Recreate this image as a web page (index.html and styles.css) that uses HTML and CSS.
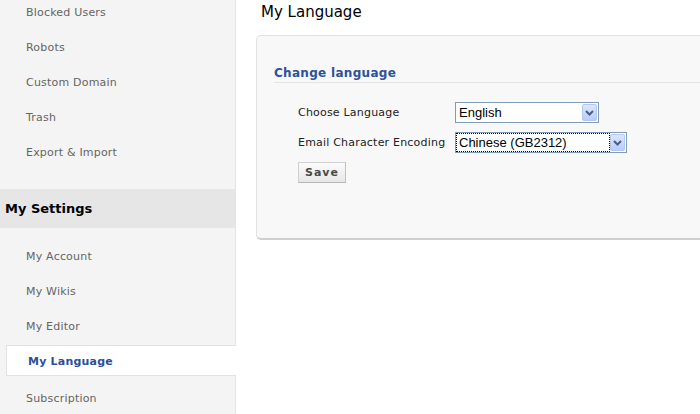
FILE: index.html
```html
<!DOCTYPE html>
<html lang="en">
<head>
    <meta charset="UTF-8">
    <title>My Language</title>
    <link rel="stylesheet" href="styles.css">
</head>
<body>
    <div class="sidebar">
        <ul class="nav first">
            <li>Blocked Users</li>
            <li>Robots</li>
            <li>Custom Domain</li>
            <li>Trash</li>
            <li>Export &amp; Import</li>
        </ul>
        <div class="nav-title">My Settings</div>
        <ul class="nav">
            <li>My Account</li>
            <li>My Wikis</li>
            <li>My Editor</li>
            <li class="active">My Language</li>
            <li>Subscription</li>
        </ul>
    </div>

    <div class="main">
        <h1>My Language</h1>
        <div class="panel">
            <h2>Change language</h2>

            <div class="row">
                <label for="language">Choose Language</label>
                <div class="select-box">
                    <select id="language">
                        <option>English</option>
                        <option>中文(简体)</option>
                        <option>中文(繁體)</option>
                    </select>
                    <span class="arrow"><svg width="9" height="6" viewBox="0 0 9 6"><polyline points="1,1 4.5,4.5 8,1" fill="none" stroke="#4a5d85" stroke-width="2"/></svg></span>
                </div>
            </div>

            <div class="row">
                <label for="encoding">Email Character Encoding</label>
                <div class="select-box wide">
                    <select id="encoding" class="focused">
                        <option>Chinese (GB2312)</option>
                        <option>Unicode (UTF-8)</option>
                    </select>
                    <span class="arrow"><svg width="9" height="6" viewBox="0 0 9 6"><polyline points="1,1 4.5,4.5 8,1" fill="none" stroke="#4a5d85" stroke-width="2"/></svg></span>
                </div>
            </div>

            <button>Save</button>
        </div>
    </div>
</body>
</html>
```

FILE: styles.css
```css
body {
    margin: 0;
    display: flex;
    overflow: hidden;
    height: 414px;
    font-family: "DejaVu Sans", Verdana, sans-serif;
    font-size: 11px;
    letter-spacing: 0.2px;
    background-color: #fff;
}
.sidebar {
    width: 235px;
    flex-shrink: 0;
    background-color: #f4f4f4;
    border-right: 1px solid #e4e4e4;
}
.nav {
    list-style: none;
    margin: 0;
    padding: 12px 0 0 0;
    display: flex;
    flex-direction: column;
    gap: 4px;
}
.nav.first {
    margin-top: -4px;
    padding-top: 0;
}
.nav li {
    height: 31px;
    line-height: 33px;
    padding-left: 26px;
    color: #646464;
}
.nav li.active {
    box-sizing: border-box;
    margin: 0 -1px 2px 6px;
    padding-left: 21px;
    line-height: 31px;
    background-color: #fff;
    border: 1px solid #e2e2e2;
    border-right: none;
    color: #2c4f9b;
    font-weight: bold;
}
.nav-title {
    margin-top: 22px;
    height: 39px;
    line-height: 40px;
    padding-left: 5px;
    background-color: #e6e6e6;
    font-size: 13px;
    font-weight: bold;
    letter-spacing: 0;
    color: #000;
}
.main {
    flex: 1;
    padding-left: 20px;
}
h1 {
    margin: 0;
    padding-left: 5px;
    height: 24px;
    line-height: 24px;
    font-size: 15px;
    font-weight: normal;
    letter-spacing: 0;
    color: #000;
}
.panel {
    margin-top: 11px;
    margin-right: -10px;
    padding: 29px 0 55px 17px;
    background-color: #f8f8f8;
    border: 1px solid #e2e2e2;
    border-bottom: 2px solid #cfcfcf;
    border-radius: 5px;
}
h2 {
    margin: 0 0 19px 0;
    padding-bottom: 1px;
    line-height: 16px;
    font-size: 12px;
    font-weight: bold;
    letter-spacing: 0.3px;
    color: #2c529c;
    border-bottom: 1px solid #e4e4e4;
}
.row {
    display: flex;
    align-items: center;
    margin: 0 0 9px 24px;
    height: 21px;
}
.row label {
    width: 157px;
    color: #222;
}
.select-box {
    box-sizing: border-box;
    width: 144px;
    height: 21px;
    display: flex;
    align-items: center;
    background-color: #fff;
    border: 1px solid #7f9db9;
}
.select-box.wide {
    width: 172px;
}
.select-box select {
    flex: 1;
    height: 17px;
    margin: 0 1px;
    padding: 0 0 0 2px;
    appearance: none;
    -webkit-appearance: none;
    border: none;
    background: transparent;
    font-family: "Liberation Sans", Arial, sans-serif;
    font-size: 13px;
    letter-spacing: 0;
    color: #000;
}
.select-box select.focused {
    outline: 1px dotted #000;
    outline-offset: 0;
}
.arrow {
    box-sizing: border-box;
    width: 15px;
    height: 17px;
    margin-right: 1px;
    display: flex;
    align-items: center;
    justify-content: center;
    background: linear-gradient(#dce6fe, #b9cdf9);
    border: 1px solid #b4c6f2;
    border-radius: 2px;
}
button {
    margin-left: 24px;
    height: 21px;
    padding: 0 6px;
    font-family: "DejaVu Sans", Verdana, sans-serif;
    font-size: 11px;
    font-weight: bold;
    letter-spacing: 1px;
    color: #4a4a4a;
    background: linear-gradient(#fbfbfb, #e6e6e6);
    border: 1px solid #d0d0d0;
    border-bottom-color: #b8b8b8;
    border-right-color: #c0c0c0;
}
```
